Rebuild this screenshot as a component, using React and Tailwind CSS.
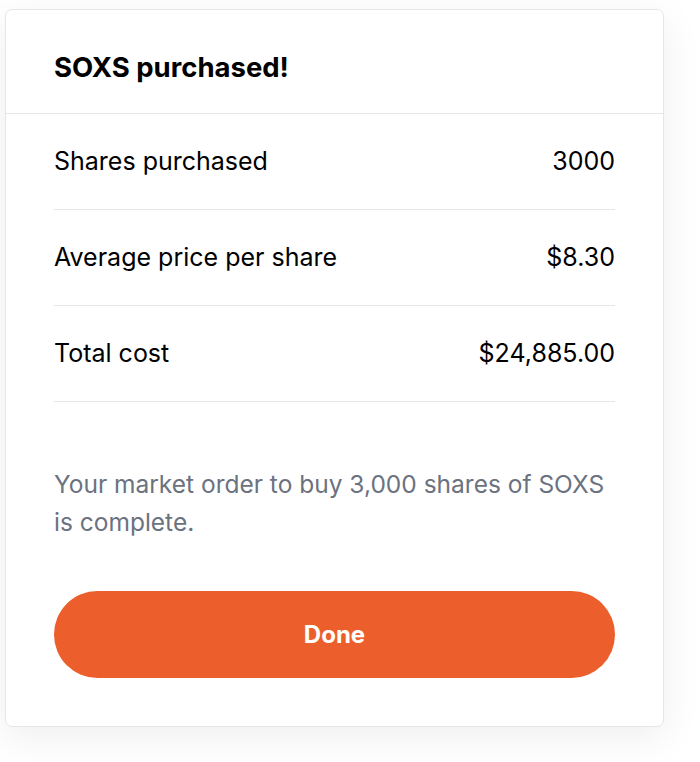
export default function App() {
  const rows = [
    { label: "Shares purchased", value: "3000" },
    { label: "Average price per share", value: "$8.30" },
    { label: "Total cost", value: "$24,885.00" },
  ];

  return (
    <div
      className="min-h-[762px] w-[700px] bg-white pl-[5px] pt-[9px]"
      style={{ fontFamily: "Inter, 'Liberation Sans', sans-serif" }}
    >
      <div className="w-[659px] rounded-[7px] border border-[#e3e7eb] bg-white shadow-[0_10px_40px_rgba(0,0,0,0.07)]">
        {/* Header */}
        <div className="flex h-[104px] items-center border-b border-[#e3e7eb] px-[48px] pt-[12px]">
          <h1 className="text-[27.5px] font-bold text-black">SOXS purchased!</h1>
        </div>

        <div className="px-[48px] pb-[48px]">
          {rows.map((row) => (
            <div
              key={row.label}
              className="flex h-[96px] items-center justify-between border-b border-[#e3e7eb] pt-[1px] text-[25px] text-black"
            >
              <span>{row.label}</span>
              <span>{row.value}</span>
            </div>
          ))}

          <p className="mt-[63px] text-[24.5px] leading-[38px] text-[#6b7280]">
            Your market order to buy 3,000 shares of SOXS is complete.
          </p>

          <button className="mt-[50px] flex h-[87px] w-full items-center justify-center rounded-full bg-[#ec5f2c] text-[24px] font-bold text-white">
            Done
          </button>
        </div>
      </div>
    </div>
  );
}
